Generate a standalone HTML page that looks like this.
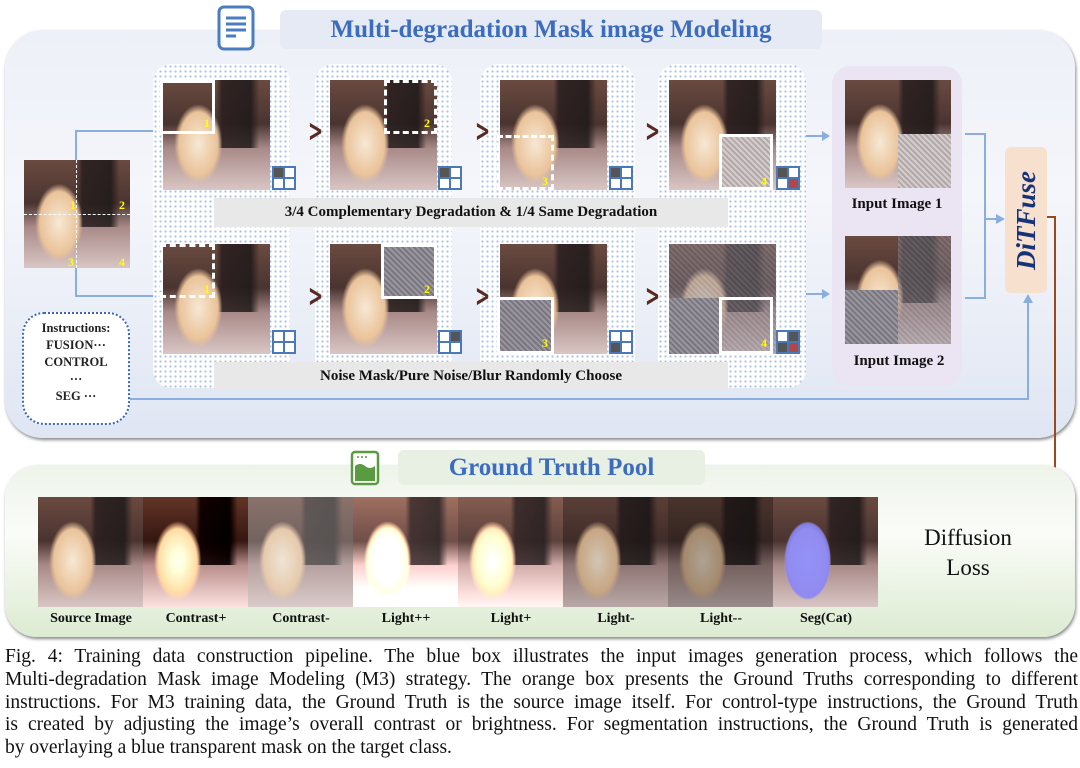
<!DOCTYPE html>
<html><head><meta charset="utf-8"><style>
*{margin:0;padding:0;box-sizing:border-box}
body{width:1080px;height:768px;background:#fff;position:relative;overflow:hidden;font-family:"Liberation Serif",serif}
.a{position:absolute}
.cat{position:absolute;background:
radial-gradient(ellipse 30% 48% at 33% 58%,#f7e8d4 0%,#eac39a 60%,rgba(230,180,130,0) 75%),
linear-gradient(90deg,rgba(0,0,0,0) 50%,rgba(40,30,30,.85) 55%,rgba(30,25,25,.85) 82%,rgba(0,0,0,0) 90%) 0 0/100% 62% no-repeat,
linear-gradient(180deg,#6a4a40 0%,#4a3430 40%,#a88a88 62%,#d9c6c4 100%);}
.q{position:absolute;background:#8b8790;background-image:repeating-linear-gradient(45deg,#7a7680 0 2px,#9a96a0 2px 4px)}
.wb{position:absolute;border:3px solid #fff}
.wd{position:absolute;border:3px dashed #fff}
.n{position:absolute;color:#ff0;font-weight:bold;font-size:12px}
.dot{position:absolute;border-radius:18px;background-color:#fff;background-image:radial-gradient(#a9c0e4 1px,transparent 1.2px);background-size:5px 5px}
.grid{position:absolute;width:24px;height:24px;border:2px solid #4a78b8;background:#4a78b8;display:grid;grid-template-columns:1fr 1fr;gap:2px}
.grid i{background:#fff}
.grid i.d{background:#555}.grid i.r{background:#b04848}
.bar{position:absolute;background:#e8e8e8;font-weight:bold;font-size:15px;text-align:center;color:#111}
.chev{position:absolute;font-size:30px;color:#5a2a20;font-family:"DejaVu Sans",sans-serif;font-weight:bold;transform:scaleX(.6)}
.lbl{position:absolute;font-weight:bold;font-size:15px;color:#111;text-align:center}
.line{position:absolute;background:#8aaee0}
.cl{position:absolute;left:5px;width:1073px;font-size:19.5px;line-height:22px;text-align:justify;text-align-last:justify;color:#111;white-space:nowrap}
.cl.last{text-align-last:left}
</style></head><body>

<div class="a" style="left:5px;top:30px;width:1070px;height:408px;border-radius:38px;background:linear-gradient(180deg,#edf0f8,#f5f6fb 40%,#dfe6f3);box-shadow:1px 2px 3px #888"></div>
<div class="a" style="left:280px;top:10px;width:542px;height:39px;border-radius:6px;background:#e5eaf4;color:#3b6cc0;font-weight:bold;font-size:25px;text-align:center;line-height:39px">Multi-degradation Mask image Modeling</div>
<svg class="a" style="left:216px;top:5px" width="40" height="46"><rect x="3" y="2" width="34" height="42" rx="5" fill="#fff" stroke="#4a7cc0" stroke-width="3"/><path d="M10 13h20M10 19h20M10 25h20M10 31h10" stroke="#4a7cc0" stroke-width="3"/></svg>

<div class="cat" style="left:24px;top:160px;width:106px;height:108px"></div>
<div class="a" style="left:24px;top:214px;width:106px;border-top:1px dashed #fff"></div>
<div class="a" style="left:76px;top:160px;height:108px;border-left:1px dashed #fff"></div>
<div class="n" style="left:70px;top:198px">1</div><div class="n" style="left:119px;top:198px">2</div>
<div class="n" style="left:68px;top:255px">3</div><div class="n" style="left:119px;top:255px">4</div>

<div class="line" style="left:75px;top:130px;width:2px;height:30px"></div>
<div class="line" style="left:75px;top:130px;width:80px;height:2px"></div>
<div class="line" style="left:75px;top:268px;width:2px;height:28px"></div>
<div class="line" style="left:75px;top:295px;width:80px;height:2px"></div>

<div class="dot" style="left:153px;top:64px;width:137px;height:324px"></div>
<div class="dot" style="left:315px;top:64px;width:137px;height:324px"></div>
<div class="dot" style="left:480px;top:64px;width:155px;height:324px"></div>
<div class="dot" style="left:658px;top:64px;width:148px;height:324px"></div>

<div class="cat" style="left:163px;top:80px;width:107px;height:110px"></div>
<div class="wb" style="left:160px;top:80px;width:55px;height:54px"></div><div class="n" style="left:204px;top:116px">1</div>
<div class="cat" style="left:330px;top:80px;width:107px;height:110px"></div>
<div class="wd" style="left:384px;top:80px;width:53px;height:54px"></div><div class="n" style="left:424px;top:116px">2</div>
<div class="cat" style="left:500px;top:80px;width:107px;height:110px"></div>
<div class="wd" style="left:497px;top:135px;width:57px;height:55px"></div><div class="n" style="left:542px;top:174px">3</div>
<div class="cat" style="left:669px;top:80px;width:107px;height:110px"></div>
<div class="q" style="left:722px;top:137px;width:50px;height:50px;background:#c8bcbc;background-image:repeating-linear-gradient(45deg,#b0a8aa 0 2px,#d6ccca 2px 4px)"></div>
<div class="wb" style="left:719px;top:134px;width:54px;height:56px"></div><div class="n" style="left:761px;top:174px">4</div>

<div class="grid" style="left:272px;top:166px"><i class="d"></i><i></i><i></i><i></i></div>
<div class="grid" style="left:438px;top:166px"><i class="d"></i><i></i><i></i><i></i></div>
<div class="grid" style="left:609px;top:166px"><i class="d"></i><i></i><i></i><i></i></div>
<div class="grid" style="left:776px;top:166px"><i class="d"></i><i></i><i></i><i class="r"></i></div>

<div class="bar" style="left:214px;top:198px;width:514px;height:29px;line-height:29px">3/4 Complementary Degradation &amp; 1/4 Same Degradation</div>

<div class="cat" style="left:163px;top:244px;width:107px;height:110px"></div>
<div class="wd" style="left:160px;top:244px;width:55px;height:54px"></div><div class="n" style="left:204px;top:282px">1</div>
<div class="cat" style="left:330px;top:244px;width:107px;height:110px"></div>
<div class="q" style="left:384px;top:244px;width:53px;height:54px"></div>
<div class="wb" style="left:381px;top:244px;width:56px;height:55px"></div><div class="n" style="left:424px;top:282px">2</div>
<div class="cat" style="left:500px;top:244px;width:107px;height:110px"></div>
<div class="q" style="left:500px;top:300px;width:52px;height:54px"></div>
<div class="wb" style="left:497px;top:297px;width:57px;height:57px"></div><div class="n" style="left:542px;top:336px">3</div>
<div class="cat" style="left:669px;top:244px;width:107px;height:110px"></div>
<div class="q" style="left:669px;top:244px;width:107px;height:110px;opacity:.5"></div>
<div class="q" style="left:669px;top:298px;width:50px;height:56px"></div>
<div class="wb" style="left:719px;top:297px;width:54px;height:57px"></div><div class="n" style="left:761px;top:336px">4</div>

<div class="grid" style="left:272px;top:330px"><i></i><i></i><i></i><i></i></div>
<div class="grid" style="left:438px;top:330px"><i></i><i class="d"></i><i></i><i></i></div>
<div class="grid" style="left:609px;top:330px"><i></i><i></i><i class="d"></i><i></i></div>
<div class="grid" style="left:776px;top:330px"><i></i><i class="d"></i><i class="d"></i><i class="r"></i></div>

<div class="bar" style="left:214px;top:362px;width:514px;height:28px;line-height:28px">Noise Mask/Pure Noise/Blur Randomly Choose</div>

<div class="chev" style="left:303px;top:114px">&gt;</div><div class="chev" style="left:470px;top:114px">&gt;</div><div class="chev" style="left:640px;top:114px">&gt;</div>
<div class="chev" style="left:303px;top:279px">&gt;</div><div class="chev" style="left:470px;top:279px">&gt;</div><div class="chev" style="left:640px;top:279px">&gt;</div>

<div class="a" style="left:832px;top:66px;width:130px;height:320px;border-radius:18px;background:#ebe4f3"></div>
<div class="cat" style="left:845px;top:80px;width:106px;height:108px"></div>
<div class="q" style="left:898px;top:134px;width:53px;height:54px;background:#c8bcbc;background-image:repeating-linear-gradient(45deg,#b0a8aa 0 2px,#d6ccca 2px 4px)"></div>
<div class="lbl" style="left:835px;top:196px;width:124px">Input Image 1</div>
<div class="cat" style="left:845px;top:236px;width:106px;height:108px"></div>
<div class="q" style="left:898px;top:236px;width:53px;height:108px;opacity:.5"></div>
<div class="q" style="left:845px;top:290px;width:53px;height:54px"></div>
<div class="lbl" style="left:837px;top:353px;width:124px">Input Image 2</div>

<div class="line" style="left:806px;top:135px;width:22px;height:2px"></div><div class="a" style="left:822px;top:131px;border-left:8px solid #8aaee0;border-top:5px solid transparent;border-bottom:5px solid transparent"></div>
<div class="line" style="left:806px;top:293px;width:22px;height:2px"></div><div class="a" style="left:822px;top:289px;border-left:8px solid #8aaee0;border-top:5px solid transparent;border-bottom:5px solid transparent"></div>
<div class="line" style="left:965px;top:133px;width:20px;height:2px"></div>
<div class="line" style="left:965px;top:297px;width:20px;height:2px"></div>
<div class="line" style="left:984px;top:133px;width:2px;height:166px"></div>
<div class="line" style="left:984px;top:218px;width:14px;height:2px"></div><div class="a" style="left:996px;top:214px;border-left:9px solid #8aaee0;border-top:5px solid transparent;border-bottom:5px solid transparent"></div>

<div class="a" style="left:1005px;top:147px;width:42px;height:146px;border-radius:6px;background:#f8e0cf"></div>
<div class="a" style="left:1005px;top:147px;width:42px;height:146px;display:flex;align-items:center;justify-content:center"><div style="transform:rotate(-90deg);white-space:nowrap;color:#16337a;font-weight:bold;font-style:italic;font-size:27px">DiTFuse</div></div>

<div class="a" style="left:22px;top:312px;width:108px;height:113px;border:2px dotted #3a68b8;border-radius:22px;background:#fff;font-weight:bold;font-size:12.5px;text-align:center;line-height:17px;padding-top:6px;color:#222">Instructions:<br>FUSION···<br>CONTROL<br>···<br>SEG ···</div>
<div class="line" style="left:130px;top:398px;width:899px;height:2px"></div>
<div class="line" style="left:1027px;top:302px;width:2px;height:98px"></div>
<div class="a" style="left:1023px;top:294px;border-bottom:9px solid #8aaee0;border-left:5px solid transparent;border-right:5px solid transparent"></div>

<div class="a" style="left:1047px;top:216px;width:9px;height:2px;background:#9a4a1a"></div>
<div class="a" style="left:1054px;top:216px;width:2px;height:334px;background:#9a4a1a"></div>
<div class="a" style="left:1036px;top:548px;width:20px;height:2px;background:#9a4a1a"></div>
<div class="a" style="left:1028px;top:544px;border-right:9px solid #9a4a1a;border-top:5px solid transparent;border-bottom:5px solid transparent"></div>

<div class="a" style="left:5px;top:465px;width:1070px;height:172px;border-radius:32px;background:linear-gradient(180deg,#eef4ea,#fafcf8 40%,#dcebd2);box-shadow:1px 2px 3px #888"></div>
<div class="a" style="left:398px;top:450px;width:307px;height:35px;border-radius:6px;background:#e8f0e3;color:#3b6cc0;font-weight:bold;font-size:25px;text-align:center;line-height:35px">Ground Truth Pool</div>
<svg class="a" style="left:350px;top:450px" width="30" height="36"><rect x="2" y="2" width="26" height="32" rx="3" fill="#fff" stroke="#5a9a40" stroke-width="2.5"/><path d="M5 16q5-4 10 0t10 0V31H5z" fill="#5a9a40"/><path d="M7 7h2M11 7h2M15 7h2" stroke="#5a9a40" stroke-width="1.5"/></svg>

<div class="cat" style="left:38px;top:497px;width:105px;height:110px"></div>
<div class="cat" style="left:143px;top:497px;width:105px;height:110px;filter:contrast(1.4)"></div>
<div class="cat" style="left:248px;top:497px;width:105px;height:110px;filter:contrast(.6) brightness(1.2)"></div>
<div class="cat" style="left:353px;top:497px;width:105px;height:110px;filter:brightness(1.5)"></div>
<div class="cat" style="left:458px;top:497px;width:105px;height:110px;filter:brightness(1.25)"></div>
<div class="cat" style="left:563px;top:497px;width:105px;height:110px;filter:brightness(.85)"></div>
<div class="cat" style="left:668px;top:497px;width:105px;height:110px;filter:brightness(.7)"></div>
<div class="cat" style="left:773px;top:497px;width:105px;height:110px"></div>
<div class="a" style="left:773px;top:497px;width:105px;height:110px;background:radial-gradient(ellipse 30% 48% at 33% 58%,rgba(130,130,255,.85) 70%,rgba(130,130,255,0) 74%)"></div>

<div class="lbl" style="left:38px;top:611px;width:106px;font-size:14px">Source Image</div>
<div class="lbl" style="left:143px;top:611px;width:106px;font-size:14px">Contrast+</div>
<div class="lbl" style="left:248px;top:611px;width:106px;font-size:14px">Contrast-</div>
<div class="lbl" style="left:353px;top:611px;width:106px;font-size:14px">Light++</div>
<div class="lbl" style="left:458px;top:611px;width:106px;font-size:14px">Light+</div>
<div class="lbl" style="left:563px;top:611px;width:106px;font-size:14px">Light-</div>
<div class="lbl" style="left:668px;top:611px;width:106px;font-size:14px">Light--</div>
<div class="lbl" style="left:773px;top:611px;width:106px;font-size:14px">Seg(Cat)</div>

<div class="a" style="left:905px;top:523px;width:126px;text-align:center;font-size:23px;line-height:30px;color:#111">Diffusion<br>Loss</div>

<div class="cl" style="top:646px">Fig. 4: Training data construction pipeline. The blue box illustrates the input images generation process, which follows the</div>
<div class="cl" style="top:669px">Multi-degradation Mask image Modeling (M3) strategy. The orange box presents the Ground Truths corresponding to different</div>
<div class="cl" style="top:692px">instructions. For M3 training data, the Ground Truth is the source image itself. For control-type instructions, the Ground Truth</div>
<div class="cl" style="top:714px">is created by adjusting the image’s overall contrast or brightness. For segmentation instructions, the Ground Truth is generated</div>
<div class="cl last" style="top:737px">by overlaying a blue transparent mask on the target class.</div>
</body></html>
